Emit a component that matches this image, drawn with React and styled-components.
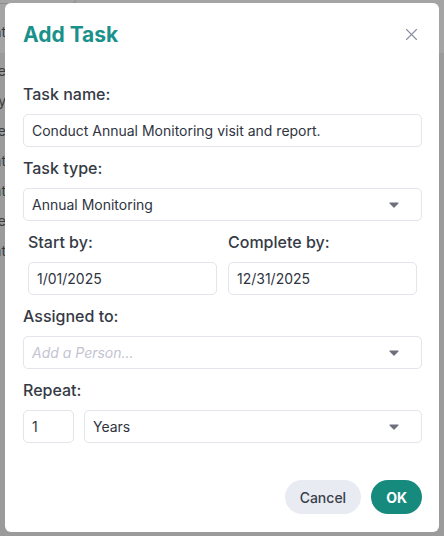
import React, { useState } from "react";
import styled, { createGlobalStyle } from "styled-components";

const GlobalStyle = createGlobalStyle`
  body {
    margin: 0;
    font-family: Inter, "Noto Sans", sans-serif;
    background: #9b9b9b;
  }
  * {
    box-sizing: border-box;
  }
`;

const behindRows = ["Title", "Daily", "Title", "Repeat", "Repeat", "Title", "Repeat"];

const Caret = () => (
  <svg width="10" height="6" viewBox="0 0 10 6">
    <path d="M1 0.5 H9 a0.6 0.6 0 0 1 0.45 1 L5.45 5.4 a0.6 0.6 0 0 1 -0.9 0 L0.55 1.5 a0.6 0.6 0 0 1 0.45 -1 Z" fill="#6e6f7c" />
  </svg>
);

const CloseIcon = () => (
  <svg width="11" height="11" viewBox="0 0 11 11">
    <path d="M0.5 0.5 L10.5 10.5 M10.5 0.5 L0.5 10.5" stroke="#8a8ea4" strokeWidth="1.1" strokeLinecap="round" />
  </svg>
);

const Select = ({ value, placeholder }) => (
  <SelectBox>
    {value ? <span>{value}</span> : <Placeholder>{placeholder}</Placeholder>}
    <Caret />
  </SelectBox>
);

const App = () => {
  const [taskName, setTaskName] = useState("Conduct Annual Monitoring visit and report.");
  const [start, setStart] = useState("1/01/2025");
  const [end, setEnd] = useState("12/31/2025");
  const [count, setCount] = useState("1");

  return (
    <>
      <GlobalStyle />
      <Page>
        <TopBand>
          <TopTab />
          <BehindRow>Print</BehindRow>
        </TopBand>
        <BehindList>
          {behindRows.map((r, i) => (
            <BehindRow key={i}>{r}</BehindRow>
          ))}
        </BehindList>

        <Modal>
          <Header>
            <Title>Add Task</Title>
            <CloseButton aria-label="Close">
              <CloseIcon />
            </CloseButton>
          </Header>

          <Field>
            <Label>Task name:</Label>
            <Input value={taskName} onChange={(e) => setTaskName(e.target.value)} />
          </Field>

          <Field>
            <Label>Task type:</Label>
            <Select value="Annual Monitoring" />
          </Field>

          <DateRow>
            <Field>
              <Label>Start by:</Label>
              <Input value={start} onChange={(e) => setStart(e.target.value)} />
            </Field>
            <Field>
              <Label>Complete by:</Label>
              <Input value={end} onChange={(e) => setEnd(e.target.value)} />
            </Field>
          </DateRow>

          <Field>
            <Label>Assigned to:</Label>
            <Select placeholder="Add a Person..." />
          </Field>

          <Field>
            <Label>Repeat:</Label>
            <RepeatRow>
              <Input value={count} onChange={(e) => setCount(e.target.value)} />
              <Select value="Years" />
            </RepeatRow>
          </Field>

          <Footer>
            <Button>Cancel</Button>
            <Button primary>OK</Button>
          </Footer>
        </Modal>
      </Page>
    </>
  );
};

const Page = styled.div`
  position: relative;
  height: 536px;
  overflow: hidden;
  background: #9b9b9b;
`;

const TopBand = styled.div`
  height: 53px;
  width: 100%;
  background: #a4a4a4;
  display: flex;
  flex-direction: column;
  align-items: flex-start;
  gap: 18px;
  & > div:last-child {
    width: 6px;
    overflow: hidden;
    direction: rtl;
  }
`;

const TopTab = styled.div`
  width: 76px;
  height: 4px;
  border-bottom: 1px solid #8f8f8f;
  border-right: 1px solid #8f8f8f;
  border-bottom-right-radius: 4px;
`;

const BehindList = styled.div`
  width: 6px;
  overflow: hidden;
  display: flex;
  flex-direction: column;
  align-items: flex-end;
  gap: 10px;
  padding-top: 8px;
`;

const BehindRow = styled.div`
  font-size: 14px;
  line-height: 20px;
  color: #3a3a3a;
  white-space: nowrap;
`;

const Modal = styled.div`
  position: absolute;
  top: 3px;
  left: 5px;
  width: 434px;
  height: 529px;
  background: #fff;
  border-radius: 6px;
  padding: 18px 17px 18px 18px;
  display: flex;
  flex-direction: column;
`;

const Header = styled.div`
  display: flex;
  justify-content: space-between;
  align-items: flex-start;
  margin-bottom: 33px;
`;

const Title = styled.h2`
  margin: 0;
  font-size: 21px;
  line-height: 28px;
  font-weight: 700;
  color: #1a918a;
`;

const CloseButton = styled.button`
  width: 22px;
  height: 22px;
  margin-top: 2px;
  border: 0;
  padding: 0;
  background: none;
  display: flex;
  align-items: center;
  justify-content: center;
  cursor: pointer;
`;

const Field = styled.div`
  display: flex;
  flex-direction: column;
  gap: 8px;
  margin-bottom: 9px;
  min-width: 0;
`;

const Label = styled.label`
  font-size: 16px;
  line-height: 24px;
  font-weight: 500;
  color: #353a45;
`;

const Input = styled.input`
  width: 100%;
  height: 33px;
  border: 1px solid #e3e4ec;
  border-radius: 5px;
  padding: 0 8px;
  font-family: inherit;
  font-size: 14px;
  color: #30343f;
  outline: none;
`;

const SelectBox = styled.div`
  height: 33px;
  border: 1px solid #e3e4ec;
  border-radius: 5px;
  padding: 0 22px 0 8px;
  display: flex;
  align-items: center;
  justify-content: space-between;
  font-size: 14px;
  color: #30343f;
  cursor: pointer;
`;

const Placeholder = styled.span`
  font-style: italic;
  color: #c3c4d2;
`;

const DateRow = styled.div`
  display: grid;
  grid-template-columns: 1fr 1fr;
  column-gap: 11px;
  padding: 0 5px;
`;

const RepeatRow = styled.div`
  display: grid;
  grid-template-columns: 51px 1fr;
  gap: 10px;
`;

const Footer = styled.div`
  margin-top: auto;
  display: flex;
  justify-content: flex-end;
  gap: 10px;
`;

const Button = styled.button`
  height: 34px;
  border: 0;
  border-radius: 17px;
  padding: 0 15px;
  font-family: inherit;
  font-size: 14px;
  font-weight: ${(p) => (p.primary ? 700 : 500)};
  background: ${(p) => (p.primary ? "#178a7e" : "#e8ebf2")};
  color: ${(p) => (p.primary ? "#fff" : "#3a3f4c")};
  cursor: pointer;
`;

export default App;
